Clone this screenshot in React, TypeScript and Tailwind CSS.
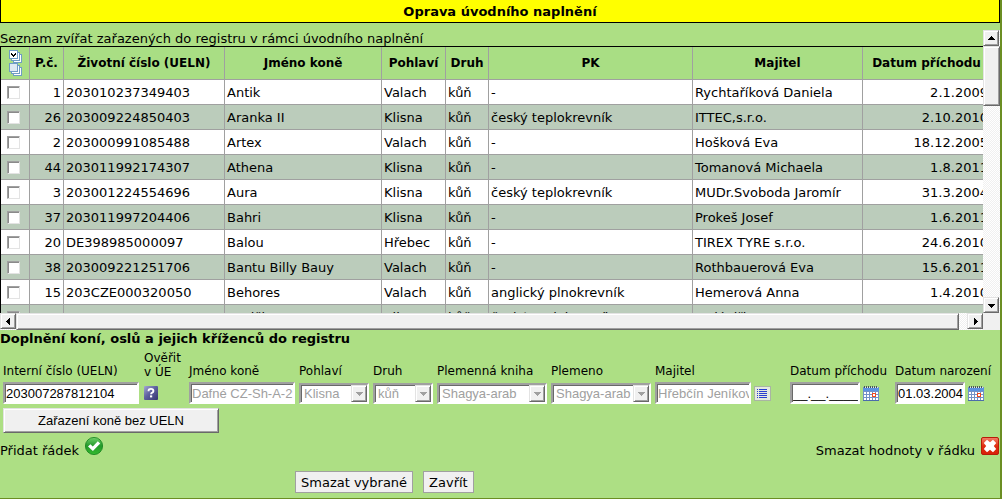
import { useState } from "react";
import type { ReactNode } from "react";
import clsx from "clsx";

const horses = [
  { no: 1, ueln: "203010237349403", name: "Antik", sex: "Valach", book: "-", owner: "Rychtaříková Daniela", date: "2.1.2009" },
  { no: 26, ueln: "203009224850403", name: "Aranka II", sex: "Klisna", book: "český teplokrevník", owner: "ITTEC,s.r.o.", date: "2.10.2010" },
  { no: 2, ueln: "203000991085488", name: "Artex", sex: "Valach", book: "-", owner: "Hošková Eva", date: "18.12.2005" },
  { no: 44, ueln: "203011992174307", name: "Athena", sex: "Klisna", book: "-", owner: "Tomanová Michaela", date: "1.8.2011" },
  { no: 3, ueln: "203001224554696", name: "Aura", sex: "Klisna", book: "český teplokrevník", owner: "MUDr.Svoboda Jaromír", date: "31.3.2004" },
  { no: 37, ueln: "203011997204406", name: "Bahri", sex: "Klisna", book: "-", owner: "Prokeš Josef", date: "1.6.2011" },
  { no: 20, ueln: "DE398985000097", name: "Balou", sex: "Hřebec", book: "-", owner: "TIREX TYRE s.r.o.", date: "24.6.2010" },
  { no: 38, ueln: "203009221251706", name: "Bantu Billy Bauy", sex: "Valach", book: "-", owner: "Rothbauerová Eva", date: "15.6.2011" },
  { no: 15, ueln: "203CZE000320050", name: "Behores", sex: "Valach", book: "anglický plnokrevník", owner: "Hemerová Anna", date: "1.4.2010" },
  { no: 21, ueln: "203009220005203", name: "Besička", sex: "Klisna", book: "český teplokrevník", owner: "Malá Jiřina", date: "1.7.2010" },
];

const sunken =
  "border-2 border-t-[#a0a0a0] border-l-[#a0a0a0] border-r-white border-b-white shadow-[inset_1px_1px_0_#696969]";
const raised =
  "bg-[#f0f0f0] border border-t-[#e3e3e3] border-l-[#e3e3e3] border-r-[#696969] border-b-[#696969] shadow-[inset_1px_1px_0_#fff,inset_-1px_-1px_0_#a0a0a0]";
const track =
  "bg-[#f8f8f8] bg-[repeating-conic-gradient(#ffffff_0_25%,#f0f0f0_0_50%)] bg-[length:2px_2px]";

function Arrow({ points }: { points: string }) {
  return (
    <svg width="7" height="7" viewBox="0 0 7 7" shapeRendering="crispEdges" aria-hidden="true">
      <polygon points={points} fill="currentColor" />
    </svg>
  );
}

function ScrollButton({ label, points }: { label: string; points: string }) {
  return (
    <button aria-label={label} className={clsx(raised, "flex size-4 shrink-0 items-center justify-center")}>
      <Arrow points={points} />
    </button>
  );
}

function SelectAllIcon() {
  return (
    <svg width="13" height="26" viewBox="0 0 13 26" shapeRendering="crispEdges" aria-hidden="true">
      {[0, 13].map((y) => (
        <g key={y} fill="#ffffff" stroke="#6f9cc4">
          <rect x="4.5" y={y + 4.5} width="8" height="8" />
          <rect x="2.5" y={y + 2.5} width="8" height="8" />
          <rect x="0.5" y={y + 0.5} width="8" height="8" fill={y ? "#dfe9f3" : "#ffffff"} />
        </g>
      ))}
      <path d="M2 3h1v1h1v1h1v-1h1v-1h1v2h-1v1h-1v1h-1v-1h-1v-1h-1z" fill="#000" />
    </svg>
  );
}

function HelpIcon() {
  return (
    <svg width="14" height="14" viewBox="0 0 14 14" aria-hidden="true">
      <defs>
        <linearGradient id="help" x1="0" y1="0" x2="1" y2="1">
          <stop offset="0" stopColor="#a6a8d4" />
          <stop offset="0.45" stopColor="#5f62a0" />
          <stop offset="1" stopColor="#34366f" />
        </linearGradient>
      </defs>
      <rect width="14" height="14" rx="1" fill="url(#help)" />
      <path d="M4.6 5.2V4.4Q4.8 2.9 7 2.9Q9.4 2.9 9.4 4.9Q9.4 6 8.2 6.6Q7.1 7.1 7.1 8.2" fill="none" stroke="#fff" strokeWidth="1.9" />
      <rect x="6" y="9.4" width="2.2" height="2" fill="#fff" />
    </svg>
  );
}

function ListIcon() {
  return (
    <svg width="17" height="15" viewBox="0 0 17 15" shapeRendering="crispEdges" aria-hidden="true">
      <rect x="0.5" y="0.5" width="16" height="14" fill="#e4ebdf" stroke="#a9b5a3" />
      {[3, 5, 7, 9, 11].map((y) => (
        <g key={y} fill="#2a3fd0">
          <rect x="3" y={y} width="1" height="1" />
          <rect x="5" y={y} width="8" height="1" />
        </g>
      ))}
    </svg>
  );
}

function CalendarIcon() {
  return (
    <svg width="16" height="15" viewBox="0 0 16 15" shapeRendering="crispEdges" aria-hidden="true">
      <rect y="1" width="16" height="14" fill="#7391c6" />
      <rect y="2" width="16" height="3" fill="#5b93e0" />
      <rect y="14" width="16" height="1" fill="#4c6cab" />
      {[1, 3, 5, 7, 9, 11, 13].map((x) => (
        <g key={x}>
          <rect x={x} y="0" width="1" height="2" fill="#47525f" />
          <rect x={x + 1} y="1" width="1" height="1" fill="#dfe6ee" />
        </g>
      ))}
      {[5, 8, 11].map((y) =>
        [1, 4, 7, 10, 13].map((x) => (
          <rect key={`${x}-${y}`} x={x} y={y + 1} width="2" height="2" fill="#fff" />
        ))
      )}
      <rect x="9.5" y="7.5" width="3" height="3" fill="#fff" stroke="#f04a20" />
    </svg>
  );
}

function OkIcon() {
  return (
    <svg width="18" height="18" viewBox="0 0 18 18" aria-hidden="true">
      <defs>
        <linearGradient id="ok" x1="0" y1="0" x2="0" y2="1">
          <stop offset="0" stopColor="#6fd06a" />
          <stop offset="0.5" stopColor="#23992a" />
          <stop offset="1" stopColor="#35bb30" />
        </linearGradient>
      </defs>
      <circle cx="9" cy="9" r="8.6" fill="url(#ok)" stroke="#12801c" strokeWidth="0.8" />
      <path d="M3 9.6L5.4 7.2L7.8 9.4L12.8 4.2L15.2 6.4L7.9 14Z" fill="#fff" />
    </svg>
  );
}

function DeleteIcon() {
  return (
    <svg width="18" height="18" viewBox="0 0 18 18" aria-hidden="true">
      <defs>
        <linearGradient id="del" x1="0" y1="0" x2="0" y2="1">
          <stop offset="0" stopColor="#f2836a" />
          <stop offset="0.5" stopColor="#e02d10" />
          <stop offset="1" stopColor="#d8200a" />
        </linearGradient>
      </defs>
      <rect x="0.5" y="0.5" width="17" height="17" rx="1.5" fill="url(#del)" stroke="#b81c08" />
      <path
        d="M6 2.8L9 5.2L12 2.8L15.2 6L12.8 9L15.2 12L12 15.2L9 12.8L6 15.2L2.8 12L5.2 9L2.8 6Z"
        fill="#fff"
      />
    </svg>
  );
}

function Field({ id, label, children }: { id: string; label: string; children: ReactNode }) {
  return (
    <div className="flex flex-col">
      <label htmlFor={id} className="text-xs leading-4 whitespace-nowrap">
        {label}
      </label>
      <div className="flex h-7 items-center gap-[3px]">{children}</div>
    </div>
  );
}

const inputText = "font-['Liberation_Sans',Arial,sans-serif] text-[13px]";

function Select({ id, value, width }: { id: string; value: string; width: string }) {
  return (
    <div className={clsx("relative", width)}>
      <select
        id={id}
        disabled
        className={clsx(sunken, inputText, "block h-[21px] w-full appearance-none bg-white pt-px pl-[3px] leading-4 text-[#a0a0a0] opacity-100")}
      >
        <option>{value}</option>
      </select>
      <span
        className={clsx(raised, "pointer-events-none absolute top-0.5 right-0.5 flex h-[17px] w-4 items-center justify-center text-[#a0a0a0]")}
      >
        <Arrow points="0,2 7,2 3.5,6" />
      </span>
    </div>
  );
}

export default function App() {
  const [ueln, setUeln] = useState("203007287812104");
  const [arrival, setArrival] = useState("__.__.____");
  const [birth, setBirth] = useState("01.03.2004");

  return (
    <div className="border-r-2 border-b-2 border-[#6b8e23] bg-[#addf84] font-['DejaVu_Sans',Verdana,sans-serif] text-[13px] text-black">
      <h1 className="mb-[7px] border-x border-b border-black bg-[#ffff00] pt-0.5 text-center leading-5 font-bold">
        Oprava úvodního naplnění
      </h1>

      {/* Scrollable list */}
      <div className="grid grid-cols-[minmax(0,1fr)_17px] grid-rows-[283px_17px]">
        <div className="overflow-hidden">
          <p className="h-4 leading-[18px]">Seznam zvířat zařazených do registru v rámci úvodního naplnění</p>
          <table className="w-[calc(100%+8px)] table-fixed border-separate border-spacing-0 border-t border-l border-black">
            <colgroup>
              <col className="w-[29px]" />
              <col className="w-[34px]" />
              <col className="w-[161px]" />
              <col className="w-[157px]" />
              <col className="w-[64px]" />
              <col className="w-[43px]" />
              <col />
              <col className="w-[170px]" />
              <col className="w-[128px]" />
            </colgroup>
            <thead>
              <tr className="h-[33px] bg-[#a9de84] text-xs whitespace-nowrap *:border-r *:border-b *:border-[#a0a0a0] *:p-0">
                <th>
                  <button aria-label="Označit vše" className="flex w-full justify-center">
                    <SelectAllIcon />
                  </button>
                </th>
                <th>P.č.</th>
                <th>Životní číslo (UELN)</th>
                <th>Jméno koně</th>
                <th>Pohlaví</th>
                <th>Druh</th>
                <th>PK</th>
                <th>Majitel</th>
                <th>Datum příchodu</th>
              </tr>
            </thead>
            <tbody>
              {horses.map((h) => (
                <tr
                  key={h.no}
                  className="h-[25px] bg-white whitespace-nowrap even:bg-[#bbccbb] *:border-r *:border-b *:border-[#a0a0a0] *:px-0.5 *:pt-0.5 *:pb-0"
                >
                  <td>
                    <input
                      type="checkbox"
                      aria-label={h.name}
                      className={clsx(
                        "mb-0.5 ml-1 block size-[13px] appearance-none border border-t-[#a0a0a0] border-l-[#a0a0a0] border-r-[#e3e3e3] border-b-[#e3e3e3] bg-white shadow-[inset_1px_1px_0_#8a8a8a]",
                        "checked:bg-black"
                      )}
                    />
                  </td>
                  <td className="text-right">{h.no}</td>
                  <td>{h.ueln}</td>
                  <td>{h.name}</td>
                  <td>{h.sex}</td>
                  <td>kůň</td>
                  <td>{h.book}</td>
                  <td>{h.owner}</td>
                  <td className="text-right">{h.date}</td>
                </tr>
              ))}
            </tbody>
          </table>
        </div>

        <div className={clsx(track, "flex flex-col")}>
          <ScrollButton label="Nahoru" points="0,5 7,5 3.5,1" />
          <div className={clsx(raised, "h-[60px]")} />
          <div className="flex-1" />
          <ScrollButton label="Dolů" points="0,2 7,2 3.5,6" />
        </div>

        <div className={clsx(track, "flex")}>
          <ScrollButton label="Vlevo" points="5,0 5,7 1,3.5" />
          <div className={clsx(raised, "mr-2 flex-1")} />
          <ScrollButton label="Vpravo" points="2,0 2,7 6,3.5" />
        </div>
        <div className="bg-[#f0f0f0]" />
      </div>

      {/* New record */}
      <h2 className="h-4 leading-[18px] font-bold">Doplnění koní, oslů a jejich kříženců do registru</h2>
      <form onSubmit={(e) => e.preventDefault()}>
        <div className="grid h-[61px] grid-cols-[141px_45px_110px_74px_64px_114px_104px_135px_105px_1fr] items-end pl-[3px]">
          <Field id="ueln" label="Interní číslo (UELN)">
            <input
              id="ueln"
              value={ueln}
              onChange={(e) => setUeln(e.target.value)}
              className={clsx(sunken, inputText, "h-[22px] w-[136px] bg-white pl-px")}
            />
          </Field>
          <div className="flex flex-col text-xs leading-[14px]">
            <span>
              Ověřit
              <br />v ÚE
            </span>
            <div className="flex h-7 items-center">
              <button type="button" aria-label="Ověřit v ÚE">
                <HelpIcon />
              </button>
            </div>
          </div>
          <Field id="name" label="Jméno koně">
            <input
              id="name"
              disabled
              defaultValue="Dafné CZ-Sh-A-293"
              className={clsx(sunken, inputText, "h-[22px] w-[106px] bg-white pl-px text-[#a0a0a0]")}
            />
          </Field>
          <Field id="sex" label="Pohlaví">
            <Select id="sex" value="Klisna" width="w-[70px]" />
          </Field>
          <Field id="kind" label="Druh">
            <Select id="kind" value="kůň" width="w-[60px]" />
          </Field>
          <Field id="book" label="Plemenná kniha">
            <Select id="book" value="Shagya-arab" width="w-[110px]" />
          </Field>
          <Field id="breed" label="Plemeno">
            <Select id="breed" value="Shagya-arab" width="w-[100px]" />
          </Field>
          <Field id="owner" label="Majitel">
            <input
              id="owner"
              disabled
              defaultValue="Hřebčín Jeníkov"
              className={clsx(sunken, inputText, "h-[22px] w-24 bg-white pl-px text-[#a0a0a0]")}
            />
            <button type="button" aria-label="Vybrat majitele">
              <ListIcon />
            </button>
          </Field>
          <Field id="arrival" label="Datum příchodu">
            <input
              id="arrival"
              value={arrival}
              onChange={(e) => setArrival(e.target.value)}
              className={clsx(sunken, inputText, "h-[22px] w-[70px] bg-white pl-px")}
            />
            <button type="button" aria-label="Kalendář">
              <CalendarIcon />
            </button>
          </Field>
          <Field id="birth" label="Datum narození">
            <input
              id="birth"
              value={birth}
              onChange={(e) => setBirth(e.target.value)}
              className={clsx(sunken, inputText, "h-[22px] w-[70px] bg-white pl-px")}
            />
            <button type="button" aria-label="Kalendář">
              <CalendarIcon />
            </button>
          </Field>
        </div>

        <button
          type="button"
          className={clsx(raised, inputText, "mt-px ml-[3px] block h-[25px] w-[216px]")}
        >
          Zařazení koně bez UELN
        </button>

        <div className="mt-1 flex h-[19px] justify-between pr-px">
          <button type="button" className="flex gap-1.5">
            <span className="mt-1">Přidat řádek</span>
            <OkIcon />
          </button>
          <button type="button" className="flex gap-1.5">
            <span className="mt-1">Smazat hodnoty v řádku</span>
            <DeleteIcon />
          </button>
        </div>

        <div className="mt-[15px] flex gap-2.5 pb-[5px] pl-[295px]">
          <button type="button" className="h-[22px] border border-[#a0a0a0] bg-[#f0f0f0] px-[5px] pt-px leading-5">
            Smazat vybrané
          </button>
          <button type="button" className="h-[22px] border border-[#a0a0a0] bg-[#f0f0f0] px-[5px] pt-px leading-5">
            Zavřít
          </button>
        </div>
      </form>
    </div>
  );
}
